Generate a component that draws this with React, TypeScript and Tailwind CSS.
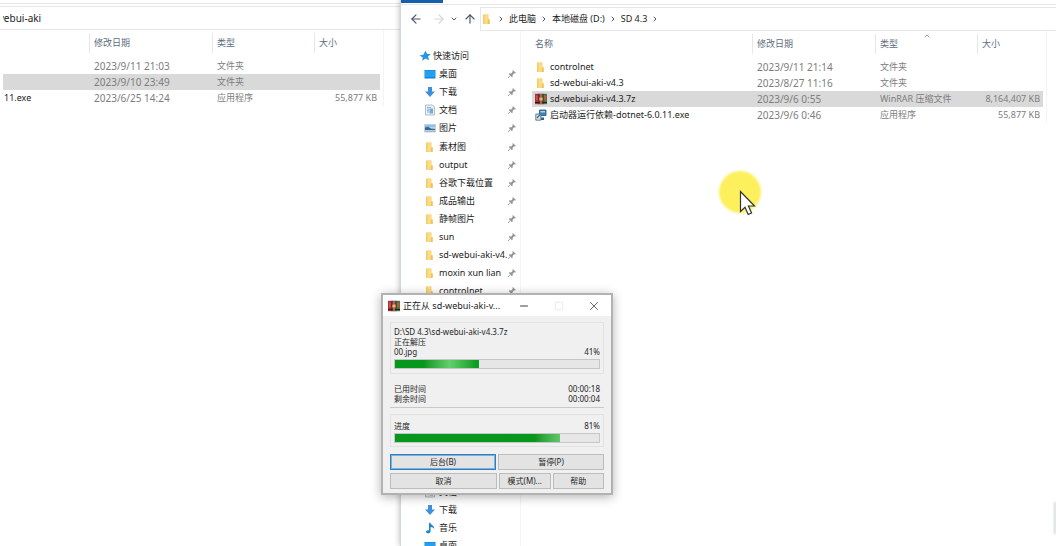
import type { ReactNode } from 'react'
import { ArrowLeft, ArrowRight, ArrowUp, ChevronDown, ChevronRight, ChevronUp, Minus, Square, X } from 'lucide-react'

type IconName = 'folder' | 'desktop' | 'download' | 'document' | 'picture' | 'music' | 'star' | 'rar' | 'setup'

interface FileRow {
  name: string
  icon?: IconName
  date: string
  type: string
  size?: string
  selected?: boolean
}

const leftFiles: FileRow[] = [
  { name: '', date: '2023/9/11 21:03', type: '文件夹' },
  { name: '', date: '2023/9/10 23:49', type: '文件夹', selected: true },
  { name: '11.exe', date: '2023/6/25 14:24', type: '应用程序', size: '55,877 KB' },
]

const rightFiles: FileRow[] = [
  { name: 'controlnet', icon: 'folder', date: '2023/9/11 21:14', type: '文件夹' },
  { name: 'sd-webui-aki-v4.3', icon: 'folder', date: '2023/8/27 11:16', type: '文件夹' },
  { name: 'sd-webui-aki-v4.3.7z', icon: 'rar', date: '2023/9/6 0:55', type: 'WinRAR 压缩文件', size: '8,164,407 KB', selected: true },
  { name: '启动器运行依赖-dotnet-6.0.11.exe', icon: 'setup', date: '2023/9/6 0:46', type: '应用程序', size: '55,877 KB' },
]

const places: { name: string; icon: IconName }[] = [
  { name: '桌面', icon: 'desktop' },
  { name: '下载', icon: 'download' },
  { name: '文档', icon: 'document' },
  { name: '图片', icon: 'picture' },
]

const pinnedFolders = ['素材图', 'output', '谷歌下载位置', '成品输出', '静帧图片', 'sun', 'sd-webui-aki-v4.3', 'moxin xun lian', 'controlnet']

const computer: { name: string; icon: IconName }[] = [
  { name: '文档', icon: 'document' },
  { name: '下载', icon: 'download' },
  { name: '音乐', icon: 'music' },
  { name: '桌面', icon: 'desktop' },
]

function Icon({ name }: { name: IconName }) {
  return (
    <svg viewBox="0 0 12 12" className="size-3 shrink-0" aria-hidden="true">
      {name === 'folder' && (
        <>
          <path d="M2 1.5h5.200v9.500H2z" fill="#f3cd68" />
          <path d="M3.500 1.5h4v4l1 1v4.500h-5z" fill="#fbdc86" />
          <path d="M6.800 6.800l1.900-.6V11H6.800z" fill="#efc256" />
        </>
      )}
      {name === 'desktop' && (
        <>
          <path d="M.5 2h11v8.5H.5z" fill="#1182d4" />
          <path d="M1 2.5h10v6.6H1z" fill="#23a0f0" />
        </>
      )}
      {name === 'download' && <path d="M4 1h4v4.600h3L6 11 1 5.600h3z" fill="#3f8fdc" />}
      {name === 'document' && (
        <>
          <path d="M1.500 1h7l2 2v8h-9z" fill="#e9f1f7" stroke="#9fb0bd" strokeWidth=".8" />
          <path d="M3 3.500h4M3 5h2M3 6.500h2M3 8h2" stroke="#7fa7c9" strokeWidth=".8" />
          <path d="M5.500 4.500h3.500v5H5.500z" fill="#78abd2" />
        </>
      )}
      {name === 'picture' && (
        <>
          <path d="M.5 2.500h11v7.500H.5z" fill="#dcebf6" stroke="#a9bac8" strokeWidth=".6" />
          <path d="M1 3h10v2.500H1z" fill="#8cc0ea" />
          <path d="M1 5.500l3-.8 3 1.800 4 .3v2.700H1z" fill="#35678f" />
          <path d="M1 8h10v1.500H1z" fill="#b9cfdd" />
        </>
      )}
      {name === 'music' && (
        <path d="M5 .8h1.200c.3 2 4.400 2.600 4 6.200C9.600 5.600 8.200 5 6.600 4.900V9c0 1.700-1.600 2.500-3 2.300C2.100 11.100 1.600 10 2.300 9.100 3 8.300 4.100 8.100 5 8.400z" fill="#1c86c8" />
      )}
      {name === 'star' && (
        <path d="M6.600.8l1.500 3.100 3.700.1-2.700 2.500.9 3.700-3.500-1.600-3.200 2.100.3-3.500L.4 5.500l3.900-.8z" fill="#2b93e2" />
      )}
      {name === 'rar' && (
        <>
          <path d="M0 .8h4v10.400H0z" fill="#a8303f" />
          <path d="M4 .8h4v10.400H4z" fill="#4557a8" />
          <path d="M8 .8h4v10.400H8z" fill="#3d7a45" />
          <path d="M3.600.8h.8v10.400h-.8zM7.600.8h.8v10.400h-.8z" fill="#2b1a22" />
          <path d="M0 9h12v1H0z" fill="#2b1a22" />
          <path d="M4.800.8h2.400v10.400H4.800z" fill="#b8622a" />
          <path d="M4.400 4.600h3.200v2.800H4.400z" fill="#f0bb55" />
          <path d="M.8 2.600h2v4.600h-2zM9.200 2.600h2v4.600h-2z" fill="#cf5140" />
        </>
      )}
      {name === 'setup' && (
        <>
          <path d="M4.500 1h6.500v5.500H4.500z" fill="#3a85b8" stroke="#33566e" strokeWidth=".8" />
          <path d="M5.500 2h4.500v1.500H5.500z" fill="#a9d4ec" />
          <path d="M.8 5h5v6.200h-5z" fill="#d9e2e8" stroke="#4c6375" strokeWidth=".8" />
          <path d="M6.500 6v2.500h2.500V11H6z" fill="#33627f" />
          <path d="M2 9l3-3.500" stroke="#2b74a8" strokeWidth="1.200" />
        </>
      )}
    </svg>
  )
}

function Pin() {
  return (
    <svg viewBox="0 0 10 10" className="size-2.5 shrink-0" aria-hidden="true">
      <path d="M5.800 1l3.200 3-1 .4-.9-.1-1.500 1.600.1 1.700-.8.600-3.100-3.100.6-.8 1.800.1L5.700 2.800l-.2-1z" fill="#90979c" />
      <path d="M3.400 6.400L1 9" stroke="#90979c" strokeWidth=".9" />
    </svg>
  )
}

function SideItem({ name, icon, pinned }: { name: string; icon: IconName; pinned?: boolean }) {
  return (
    <li className="flex h-[18px] items-center">
      <a href="#" className="flex min-w-0 flex-1 items-center gap-[3px] overflow-hidden">
        <Icon name={icon} />
        <span className="overflow-hidden whitespace-nowrap">{name}</span>
      </a>
      {pinned && <Pin />}
    </li>
  )
}

function HeaderCell({ children, sorted }: { children?: ReactNode; sorted?: boolean }) {
  return (
    <th className="p-0 align-top font-normal">
      <div className="relative flex h-5 items-center border-l border-gray-200 pl-1">
        {children}
        {sorted && <ChevronUp className="absolute -top-0.5 left-1/2 -ml-1 size-2 text-gray-500" strokeWidth={2} />}
      </div>
    </th>
  )
}

function FileTable({ files, nameLabel, sorted }: { files: FileRow[]; nameLabel?: string; sorted?: boolean }) {
  return (
    <table className="w-full table-fixed border-collapse text-left whitespace-nowrap">
      <colgroup>
        <col />
        <col className="w-[123px]" />
        <col className="w-[102px]" />
        <col className="w-[66px]" />
      </colgroup>
      <thead className="text-[#5d6d80]">
        <tr className="h-[25px]">
          <th className="p-0 align-top font-normal">
            <div className="flex h-5 items-center pl-[3px]">{nameLabel}</div>
          </th>
          <HeaderCell>修改日期</HeaderCell>
          <HeaderCell sorted={sorted}>类型</HeaderCell>
          <HeaderCell>大小</HeaderCell>
        </tr>
      </thead>
      <tbody className="text-[#7d7d7d]">
        {files.map((file) => (
          <tr key={file.date} className={file.selected ? 'h-4 bg-[#d9d9d9]' : 'h-4'}>
            <td className="p-0 text-[#1c1c1c]">
              <div className={file.icon ? 'flex items-center gap-[3px] pl-[3px]' : 'pl-px'}>
                {file.icon && <Icon name={file.icon} />}
                {file.name}
              </div>
            </td>
            <td className="p-0 pl-[5px] text-[10px] leading-3">{file.date}</td>
            <td className="p-0 pl-[5px]">{file.type}</td>
            <td className="p-0 pr-[3px] text-right">{file.size}</td>
          </tr>
        ))}
      </tbody>
    </table>
  )
}

function ProgressBar({ value, label, glow }: { value: number; label: string; glow?: boolean }) {
  return (
    <div
      role="progressbar"
      aria-label={label}
      aria-valuenow={value}
      className="h-2.5 border border-[#c6c6c6] bg-[#e6e6e6]"
    >
      <div
        className={
          glow
            ? 'h-full bg-linear-to-r from-[#06981d] from-35% via-[#5fd06c] via-65% to-[#0a9f22] to-95%'
            : 'h-full bg-linear-to-r from-[#06981d] from-85% to-[#5fc76c]'
        }
        style={{ width: `${value}%` }}
      />
    </div>
  )
}

function DialogButton({ children, primary }: { children: ReactNode; primary?: boolean }) {
  return (
    <button
      className={
        primary
          ? 'flex h-4 flex-1 items-center justify-center border border-[#2f7fc0] bg-[#e3e3e3] ring-1 ring-[#7fb0dc] ring-inset'
          : 'flex h-4 flex-1 items-center justify-center border border-[#bcbcbc] bg-[#e3e3e3]'
      }
    >
      {children}
    </button>
  )
}

function ExtractDialog() {
  return (
    <div
      role="dialog"
      aria-labelledby="dialog-title"
      className="absolute top-[293px] left-[381px] w-[232px] border-2 border-[#b2b2b2] bg-[#f0f0f0] text-[8px] leading-[10px] text-[#1f1f1f] shadow-[0_2px_10px_rgba(0,0,0,0.3)]"
    >
      <div className="flex h-[21px] items-center bg-white pl-[5px] text-[#222]">
        <Icon name="rar" />
        <h1 id="dialog-title" className="ml-[3px] flex-1 text-[9px] whitespace-nowrap">
          正在从 sd-webui-aki-v...
        </h1>
        <button aria-label="Minimize" className="flex w-[35px] justify-center">
          <Minus className="size-3 text-gray-700" strokeWidth={2} />
        </button>
        <button aria-label="Maximize" disabled className="flex w-[35px] justify-center">
          <Square className="size-2.5 text-gray-200" strokeWidth={2} />
        </button>
        <button aria-label="Close" className="flex w-[35px] justify-center">
          <X className="size-3.5 text-gray-600" strokeWidth={1.5} />
        </button>
      </div>
      <div className="flex flex-col px-[7px] pt-1.5 pb-1">
        <div className="border border-[#e2e2e2] px-[3px] pt-1 pb-1">
          <p>D:\SD 4.3\sd-webui-aki-v4.3.7z</p>
          <p>正在解压</p>
          <div className="mb-0.5 flex justify-between">
            <span>00.jpg</span>
            <span>41%</span>
          </div>
          <ProgressBar value={41} label="00.jpg" glow />
        </div>
        <div className="mt-1.5 border-b border-[#c9c9c9] px-1 pt-1 pb-[3px]">
          <div className="flex justify-between">
            <span>已用时间</span>
            <span>00:00:18</span>
          </div>
          <div className="flex justify-between">
            <span>剩余时间</span>
            <span>00:00:04</span>
          </div>
        </div>
        <div className="mt-1.5 border border-[#e2e2e2] px-[3px] pt-1.5 pb-[3px]">
          <div className="mb-0.5 flex justify-between">
            <span>进度</span>
            <span>81%</span>
          </div>
          <ProgressBar value={81} label="进度" />
        </div>
        <div className="mt-[7px] flex gap-0.5">
          <DialogButton primary>后台(B)</DialogButton>
          <DialogButton>暂停(P)</DialogButton>
        </div>
        <div className="mt-[3px] flex gap-0.5">
          <DialogButton>取消</DialogButton>
          <div className="flex flex-1 gap-0.5">
            <DialogButton>模式(M)...</DialogButton>
            <DialogButton>帮助</DialogButton>
          </div>
        </div>
      </div>
    </div>
  )
}

export default function App() {
  return (
    <div className="relative flex h-screen overflow-hidden bg-white font-['Noto_Sans','Noto_Sans_CJK_SC',sans-serif] text-[9px] leading-3 text-[#1c1c1c]">
      {/* Left explorer window */}
      <section className="w-[400px] shrink-0">
        <div className="h-1 border-b border-gray-200" />
        <div className="mt-0.5 flex h-6 items-center border-y border-gray-200 pl-[3px] text-[10px]">
          <div className="overflow-hidden">
            <span className="-ml-[7px]">webui-aki</span>
          </div>
        </div>
        <div className="mr-4 border-r border-gray-100 pt-[3px] pr-[3px] pl-[3px]">
          <FileTable files={leftFiles} />
        </div>
      </section>

      {/* Right explorer window */}
      <section className="flex min-w-0 flex-1 flex-col border-l border-gray-300 bg-white shadow-[0_0_6px_rgba(0,0,0,0.3)]">
        <div className="h-[5px] border-b border-gray-200">
          <div className="h-[3px] w-[42px] bg-[#1560a8]" />
        </div>
        <div className="mt-0.5 flex h-6 shrink-0 items-stretch">
          <div className="flex w-[79px] items-center justify-between pr-[3px] pl-2 text-gray-600">
            <button aria-label="Back">
              <ArrowLeft className="size-3.5" />
            </button>
            <button aria-label="Forward" disabled>
              <ArrowRight className="ml-1 size-3.5 text-gray-300" />
            </button>
            <button aria-label="Recent locations">
              <ChevronDown className="size-2" strokeWidth={3} />
            </button>
            <button aria-label="Up">
              <ArrowUp className="size-3.5" />
            </button>
          </div>
          <nav className="flex flex-1 items-center gap-1 border-y border-l border-gray-200">
            <Icon name="folder" />
            <ChevronRight className="size-2 text-gray-600" strokeWidth={3} />
            <a href="#">此电脑</a>
            <ChevronRight className="size-2 text-gray-600" strokeWidth={3} />
            <a href="#">本地磁盘 (D:)</a>
            <ChevronRight className="size-2 text-gray-600" strokeWidth={3} />
            <a href="#">SD 4.3</a>
            <ChevronRight className="size-2 text-gray-600" strokeWidth={3} />
          </nav>
        </div>

        <div className="flex min-h-0 flex-1">
          <aside className="w-[120px] shrink-0 overflow-hidden border-r border-gray-100 pt-4 pr-[3px]">
            <a href="#" className="flex h-[18px] items-center gap-0.5 pl-[18px]">
              <Icon name="star" />
              快速访问
            </a>
            <ul className="pl-[23px]">
              {places.map((place) => (
                <SideItem key={place.name} name={place.name} icon={place.icon} pinned />
              ))}
            </ul>
            <ul className="mt-px pl-[23px]">
              {pinnedFolders.map((name) => (
                <SideItem key={name} name={name} icon="folder" pinned />
              ))}
            </ul>
            <ul className="mt-[183px] pl-[23px]">
              {computer.map((place) => (
                <SideItem key={place.name} name={place.name} icon={place.icon} />
              ))}
            </ul>
          </aside>
          <main className="min-w-0 flex-1 pr-[9px] pl-[11px]">
            <div className="border-r border-gray-100 pt-[3px] pr-[3px]">
              <FileTable files={rightFiles} nameLabel="名称" sorted />
            </div>
          </main>
        </div>
      </section>

      <ExtractDialog />

      {/* Edge of a window parked off screen */}
      <div className="absolute top-[502px] right-0 h-8 w-0.5 bg-gray-300 blur-[1px]" />

      {/* Highlighted pointer */}
      <div className="pointer-events-none absolute top-[171px] left-[719px] size-[42px] rounded-full bg-[#fdf05c] blur-[1px]" />
      <svg viewBox="0 0 18 26" className="pointer-events-none absolute top-[190px] left-[739px] h-[26px] w-[18px]" aria-hidden="true">
        <path d="M1.500 1.500v20l4.500-4.200 3.200 7.200 3.400-1.500-3.200-7h6.100z" fill="#fff" stroke="#333" strokeWidth="1.200" />
      </svg>
    </div>
  )
}
